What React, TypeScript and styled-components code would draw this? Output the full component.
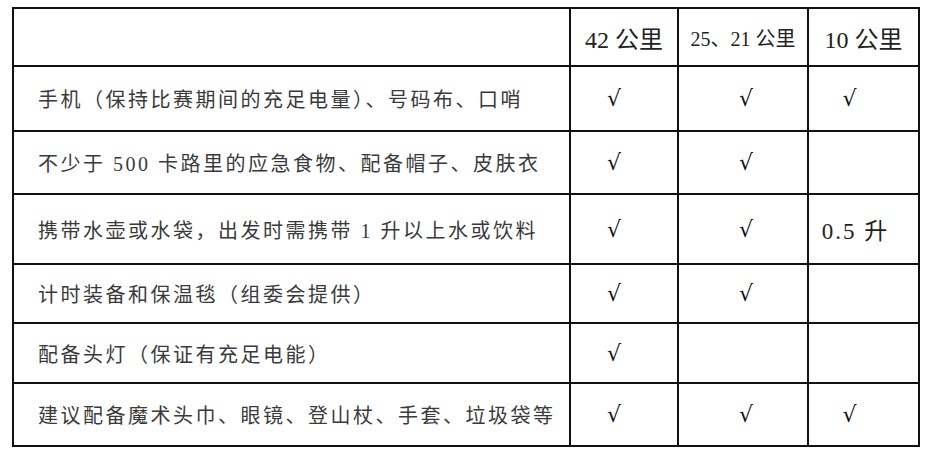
import styled, { createGlobalStyle } from 'styled-components';

const GlobalStyle = createGlobalStyle`
  html, body {
    margin: 0;
    padding: 0;
    background: #fff;
  }
`;

const Page = styled.div`
  padding: 7px 0 0 12px;
`;

const Table = styled.table`
  border-collapse: collapse;
  table-layout: fixed;
  width: 906px;
  font-family: 'Liberation Serif', 'Noto Sans CJK SC', serif;
  color: #3a3a3a;
`;

const Row = styled.tr<{ $h: number }>`
  height: ${({ $h }) => $h}px;
`;

const HeadCell = styled.th<{ $size?: number }>`
  border: 2px solid #111;
  font-weight: 400;
  font-size: ${({ $size }) => $size ?? 24}px;
  text-align: center;
  padding: 0;
  white-space: nowrap;
  color: #222;
`;

const ItemCell = styled.td`
  border: 2px solid #111;
  font-size: 20px;
  letter-spacing: 2.5px;
  padding: 0 0 0 24px;
  white-space: nowrap;
`;

const MarkCell = styled.td<{ $pl: number; $pr: number }>`
  border: 2px solid #111;
  text-align: center;
  font-family: 'DejaVu Serif', 'Liberation Serif', serif;
  font-size: 22px;
  color: #111;
  padding: 0 ${({ $pr }) => $pr}px 0 ${({ $pl }) => $pl}px;
`;

const Amount = styled.span`
  font-family: 'Liberation Serif', 'Noto Sans CJK SC', serif;
  font-size: 23px;
  letter-spacing: 2px;
  color: #222;
`;

const COLUMNS = [
  { pl: 0, pr: 20 },
  { pl: 6, pr: 0 },
  { pl: 0, pr: 28 },
];

const ROWS: { item: string; marks: (boolean | string)[]; h: number }[] = [
  { item: '手机（保持比赛期间的充足电量）、号码布、口哨', marks: [true, true, true], h: 65 },
  { item: '不少于 500 卡路里的应急食物、配备帽子、皮肤衣', marks: [true, true, false], h: 63 },
  { item: '携带水壶或水袋，出发时需携带 1 升以上水或饮料', marks: [true, true, '0.5 升'], h: 70 },
  { item: '计时装备和保温毯（组委会提供）', marks: [true, true, false], h: 59 },
  { item: '配备头灯（保证有充足电能）', marks: [true, false, false], h: 60 },
  { item: '建议配备魔术头巾、眼镜、登山杖、手套、垃圾袋等', marks: [true, true, true], h: 63 },
];

export default function App() {
  return (
    <>
      <GlobalStyle />
      <Page>
        <Table>
          <colgroup>
            <col style={{ width: 557 }} />
            <col style={{ width: 108 }} />
            <col style={{ width: 130 }} />
            <col style={{ width: 111 }} />
          </colgroup>
          <thead>
            <Row $h={58}>
              <HeadCell />
              <HeadCell>42 公里</HeadCell>
              <HeadCell $size={20}>25、21 公里</HeadCell>
              <HeadCell>10 公里</HeadCell>
            </Row>
          </thead>
          <tbody>
            {ROWS.map(({ item, marks, h }) => (
              <Row key={item} $h={h}>
                <ItemCell>{item}</ItemCell>
                {marks.map((mark, i) => {
                  const col = COLUMNS[i];
                  return (
                    <MarkCell key={i} $pl={col.pl} $pr={typeof mark === 'string' ? 16 : col.pr}>
                      {mark === true ? '√' : mark ? <Amount>{mark}</Amount> : null}
                    </MarkCell>
                  );
                })}
              </Row>
            ))}
          </tbody>
        </Table>
      </Page>
    </>
  );
}
